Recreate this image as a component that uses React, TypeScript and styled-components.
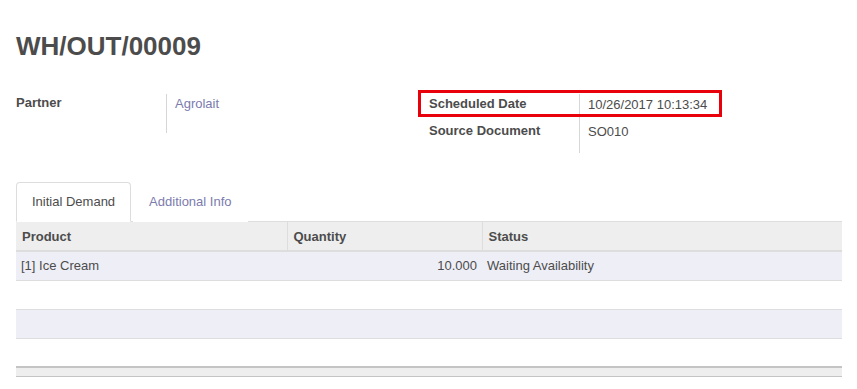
import styled, { createGlobalStyle } from "styled-components";

const GlobalStyle = createGlobalStyle`
  html, body {
    margin: 0;
    padding: 0;
    background: #fff;
  }
  body {
    font-family: "Liberation Sans", Arial, sans-serif;
    font-size: 13px;
    color: #4c4c4c;
  }
`;

const Sheet = styled.div`
  padding: 0 15px 0 16px;
`;

const Title = styled.h1`
  margin: 0;
  padding-top: 31px;
  font-size: 26px;
  line-height: 30px;
  font-weight: bold;
  color: #4c4c4c;
`;

const Groups = styled.div`
  display: grid;
  grid-template-columns: 1fr 1fr;
  margin-top: 33px;
`;

const Group = styled.div`
  display: grid;
  grid-template-columns: 150px 1fr;
  align-content: start;
`;

const Label = styled.div`
  font-weight: bold;
  line-height: 18px;
`;

const Value = styled.div<{ $tall?: number }>`
  border-left: 1px solid #d6d6d6;
  padding: 1px 0 0 8px;
  line-height: 18px;
  min-height: ${(p) => p.$tall ?? 26}px;
  box-sizing: border-box;
`;

const Link = styled.a`
  color: #7c7bad;
  text-decoration: none;
`;

const Row = styled.div<{ $shift?: number }>`
  position: relative;
  display: grid;
  grid-column: 1 / -1;
  grid-template-columns: 150px 1fr;
  & > ${Label} {
    padding-top: ${(p) => p.$shift ?? 0}px;
  }
  & > ${Value} {
    padding-top: ${(p) => (p.$shift ?? 0) + 1}px;
  }
`;

const RedBox = styled.span`
  position: absolute;
  left: -11px;
  top: -4px;
  width: 304px;
  height: 27px;
  border: 3px solid #e8000b;
  box-sizing: border-box;
  pointer-events: none;
`;

const Tabs = styled.ul`
  display: flex;
  list-style: none;
  margin: 29px 0 0;
  padding: 0;
  border-bottom: 1px solid #ddd;
`;

const Tab = styled.li<{ $active?: boolean }>`
  margin-right: 2px;
  margin-bottom: -1px;
  padding: 10px 15px 11px;
  line-height: 17px;
  border: 1px solid ${(p) => (p.$active ? "#ddd" : "transparent")};
  border-bottom-color: ${(p) => (p.$active ? "#fff" : "transparent")};
  border-radius: 4px 4px 0 0;
  background: #fff;
  color: ${(p) => (p.$active ? "#4c4c4c" : "#7c7bad")};
`;

const Table = styled.table`
  width: 100%;
  border-collapse: collapse;
  table-layout: fixed;
`;

const Th = styled.th<{ $w?: number }>`
  box-sizing: border-box;
  width: ${(p) => (p.$w ? `${p.$w}px` : "auto")};
  background: #eee;
  text-align: left;
  font-weight: bold;
  padding: 6px 6px 5px;
  line-height: 17px;
  border-bottom: 2px solid #ddd;
  border-left: 1px solid #ddd;
  &:first-child {
    border-left: none;
  }
`;

const Tr = styled.tr<{ $striped?: boolean }>`
  background: ${(p) => (p.$striped ? "#eeeef6" : "#fff")};
  border-bottom: 1px solid #ddd;
`;

const Td = styled.td<{ $right?: boolean }>`
  height: 29px;
  box-sizing: border-box;
  padding: 0 5px;
  line-height: 17px;
  text-align: ${(p) => (p.$right ? "right" : "left")};
  white-space: nowrap;
`;

const FootCell = styled.td`
  height: 9px;
  box-sizing: border-box;
  padding: 0;
  background: #eee;
  border-top: 2px solid #c4c4c4;
  border-bottom: 1px solid #c4c4c4;
`;

const rows = [
  { product: "[1] Ice Cream", qty: "10.000", status: "Waiting Availability" },
  null,
  null,
  null,
];

export default function App() {
  return (
    <>
      <GlobalStyle />
      <Sheet>
        <Title>WH/OUT/00009</Title>
        <Groups>
          <Group>
            <Label>Partner</Label>
            <Value $tall={39}>
              <Link href="#">Agrolait</Link>
            </Value>
          </Group>
          <Group>
            <Row $shift={1}>
              <Label>Scheduled Date</Label>
              <Value $tall={27}>10/26/2017 10:13:34</Value>
              <RedBox />
            </Row>
            <Row $shift={1}>
              <Label>Source Document</Label>
              <Value $tall={32}>SO010</Value>
            </Row>
          </Group>
        </Groups>
        <Tabs>
          <Tab $active>Initial Demand</Tab>
          <Tab>Additional Info</Tab>
        </Tabs>
        <Table>
          <thead>
            <tr>
              <Th $w={271}>Product</Th>
              <Th $w={195}>Quantity</Th>
              <Th>Status</Th>
            </tr>
          </thead>
          <tbody>
            {rows.map((r, i) => (
              <Tr key={i} $striped={i % 2 === 0}>
                <Td>{r?.product}</Td>
                <Td $right>{r?.qty}</Td>
                <Td>{r?.status}</Td>
              </Tr>
            ))}
          </tbody>
          <tfoot>
            <tr>
              <FootCell colSpan={3} />
            </tr>
          </tfoot>
        </Table>
      </Sheet>
    </>
  );
}
